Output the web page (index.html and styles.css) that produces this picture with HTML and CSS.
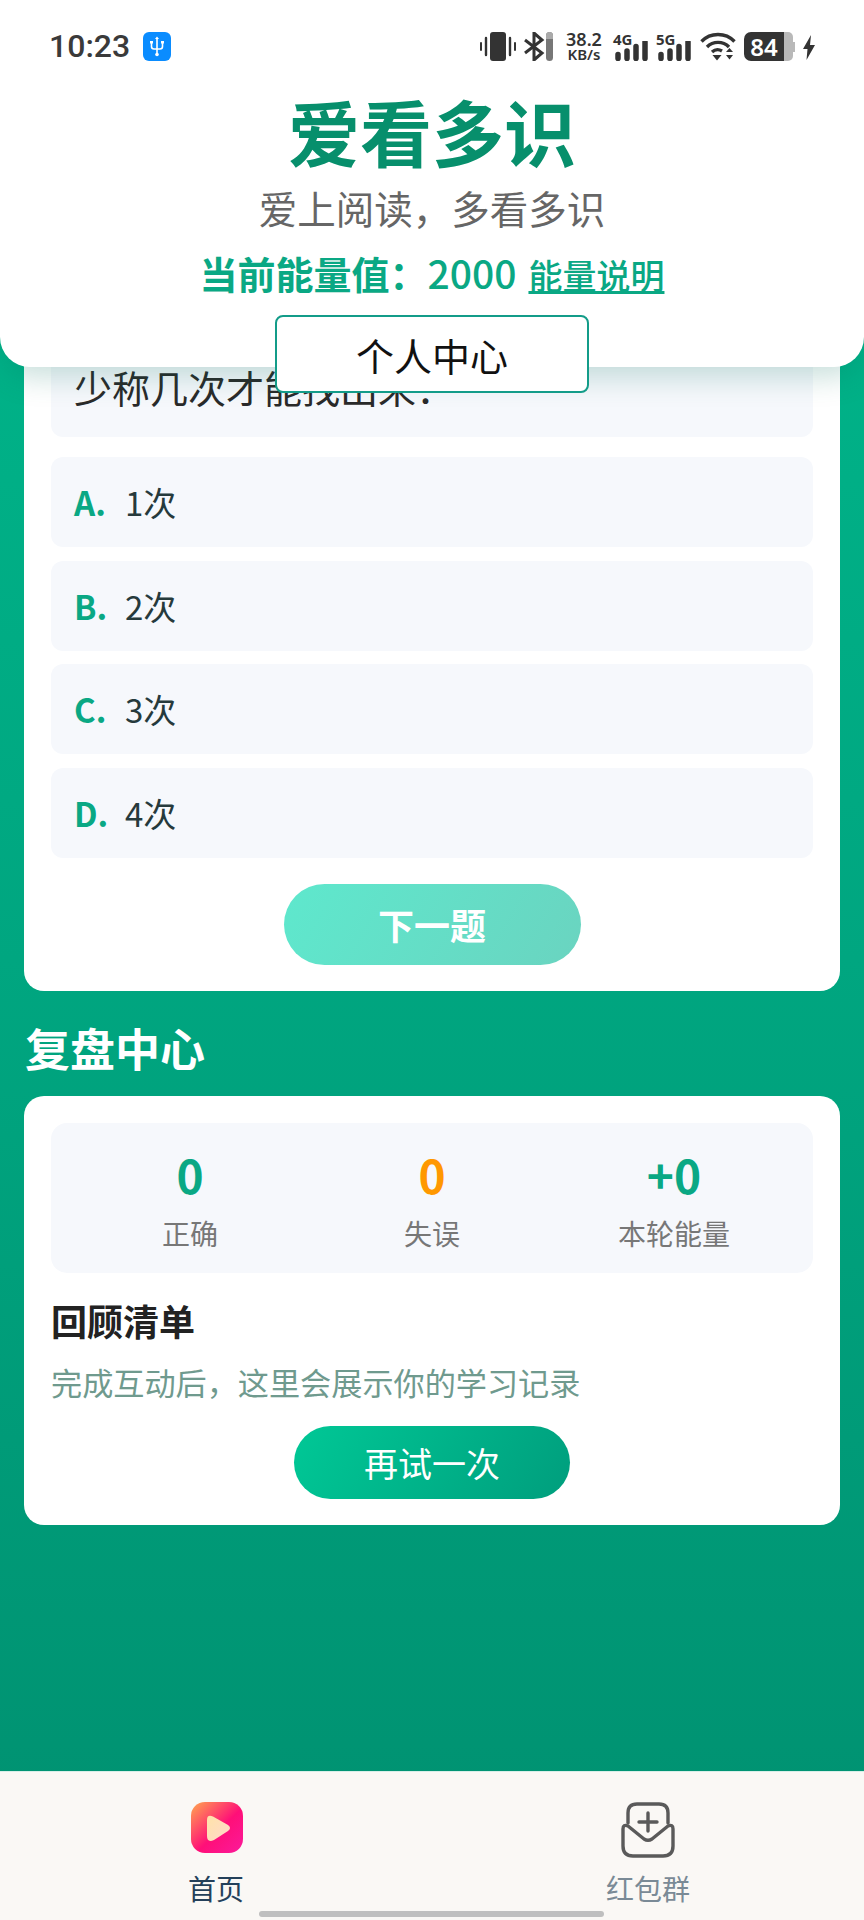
FILE: index.html
```html
<!DOCTYPE html>
<html lang="zh-CN">
<head>
  <meta charset="UTF-8" />
  <meta name="viewport" content="width=device-width, initial-scale=1.0"/>
  <title>爱看多识</title>
  <link rel="stylesheet" href="styles.css">
</head>
<body>
  <div class="app">
    <header class="top">
      <div class="status">
        <div class="status-left">
          <span class="clock">10:23</span>
          <svg class="usb" viewBox="0 0 28 29">
            <rect width="28" height="29" rx="6" fill="#0a8cff"/>
            <path d="M14 6v17M8.5 11v3.5q0 2.5 2.5 2.5h6q2.500 0 2.500-2.500V11" fill="none" stroke="#fff" stroke-width="1.600"/>
            <path d="M14 4.500l2 2.500h-4zM7 9h3v2.500H7zM18 9h3v2.500h-3z" fill="#fff"/>
            <circle cx="14" cy="22.500" r="1.800" fill="#fff"/>
          </svg>
        </div>
        <div class="status-right">
          <svg class="ic-vib" viewBox="0 0 36 29">
            <rect x="10" y="0" width="16" height="29" rx="3" fill="#333"/>
            <path d="M6 6v17M30 6v17" stroke="#333" stroke-width="2.400" stroke-linecap="round"/>
            <path d="M1 11v7M35 11v7" stroke="#333" stroke-width="2" stroke-linecap="round"/>
          </svg>
          <svg class="ic-bt" viewBox="0 0 30 29">
            <path d="M2 8l17 13-8 7V1l8 7L2 21" fill="none" stroke="#333" stroke-width="3"/>
            <rect x="23" y="0" width="7" height="29" rx="3.500" fill="#777"/>
            <path d="M23 3.500a3.500 3.500 0 0 1 7 0V7h-7z" fill="#aaa"/>
          </svg>
          <div class="speed"><b>38.2</b><b class="unit">KB/s</b></div>
          <div class="net">
            <b>4G</b>
            <svg viewBox="0 0 33 20"><path d="M3 13.500v4M12 10v7.500M21 5.500v12M30 1v16.500" stroke="#333" stroke-width="5.500" stroke-linecap="round"/></svg>
          </div>
          <div class="net">
            <b>5G</b>
            <svg viewBox="0 0 33 20"><path d="M3 13.500v4M12 10v7.500M21 5.500v12M30 1v16.500" stroke="#333" stroke-width="5.500" stroke-linecap="round"/></svg>
          </div>
          <svg class="ic-wifi" viewBox="0 0 36 29">
            <path d="M1.500 9.500a23 23 0 0 1 33 0M7 15a15.500 15.500 0 0 1 22 0M12 20a8.500 8.500 0 0 1 10 -1" fill="none" stroke="#333" stroke-width="3.400"/>
            <path d="M12.500 23h9L17 28.500zM26 20l3.500-4 3.500 4zM26 23h7l-3.500 4.500z" fill="#333"/>
          </svg>
          <div class="battery"><span class="battery-num">84</span><i class="battery-rest"></i><i class="battery-tip"></i></div>
          <svg class="ic-bolt" viewBox="0 0 12 25">
            <path d="M8 0L0 14h4.500L3.500 25 12 10H7z" fill="#333"/>
          </svg>
        </div>
      </div>
      <h1>爱看多识</h1>
      <p class="sub">爱上阅读，多看多识</p>
      <p class="energy">当前能量值：<span class="energy-num">2000</span><a href="#">能量说明</a></p>
      <button class="me-btn">个人中心</button>
    </header>

    <main>
      <section class="card quiz">
        <div class="question">少称几次才能找出来：</div>
        <div class="options">
          <div class="option"><b>A.</b><span>1次</span></div>
          <div class="option"><b>B.</b><span>2次</span></div>
          <div class="option"><b>C.</b><span>3次</span></div>
          <div class="option"><b>D.</b><span>4次</span></div>
        </div>
        <button class="next-btn">下一题</button>
      </section>

      <h2>复盘中心</h2>
      <section class="card review">
        <div class="stats">
          <div class="stat"><b class="green">0</b><span>正确</span></div>
          <div class="stat"><b class="orange">0</b><span>失误</span></div>
          <div class="stat"><b class="green">+0</b><span>本轮能量</span></div>
        </div>
        <h3>回顾清单</h3>
        <p class="hint">完成互动后，这里会展示你的学习记录</p>
        <button class="retry-btn">再试一次</button>
      </section>
    </main>

    <nav class="tabs">
      <div class="tab tab-on">
        <svg viewBox="0 0 54 52">
          <defs>
            <linearGradient id="playBg" x1="0" y1="0" x2="1" y2="1">
              <stop offset="0" stop-color="#ffa84f"/>
              <stop offset=".55" stop-color="#ff0f78"/>
              <stop offset="1" stop-color="#fb1a9b"/>
            </linearGradient>
            <linearGradient id="playFg" x1="0" y1="0" x2="1" y2="1">
              <stop offset="0" stop-color="#ffe3a8"/>
              <stop offset="1" stop-color="#ffd9cc"/>
            </linearGradient>
          </defs>
          <rect x="1" y="0" width="52" height="51" rx="14" fill="url(#playBg)"/>
          <path d="M17 18q0-6 6-3.500l15 8.500q4 3 0 6L24 38q-7 3-7-4z" fill="url(#playFg)"/>
        </svg>
        <span>首页</span>
      </div>
      <div class="tab">
        <svg viewBox="0 0 54 56" fill="none" stroke="#5a5a5a" stroke-width="3.400" stroke-linecap="round" stroke-linejoin="round">
          <path d="M7 21V11Q7 2 16 2H38Q47 2 47 11V21"/>
          <path d="M2 27V44Q2 54 12 54H42Q52 54 52 44V27Q52 22 47 24L31 37Q27 39.500 23 37L7 24Q2 22 2 27Z"/>
          <path d="M27 11V29M18 20H36"/>
        </svg>
        <span>红包群</span>
      </div>
      <i class="handle"></i>
    </nav>
  </div>
</body>
</html>
```

FILE: styles.css
```css
* {
  box-sizing: border-box;
}
body {
  margin: 0;
  font-family: "Noto Sans CJK SC", "Noto Sans", sans-serif;
  color: #222;
}
h1, h2, h3, p {
  margin: 0;
}
button {
  font-family: inherit;
  border: none;
  display: block;
}
.app {
  position: relative;
  width: 864px;
  height: 1920px;
  overflow: hidden;
  display: flex;
  flex-direction: column;
  background: linear-gradient(180deg, #00b88c 0, #00a680 50%, #009070 100%);
}

/* top panel sits over the scrolled content */
.top {
  position: absolute;
  top: 0;
  left: 0;
  right: 0;
  height: 367px;
  z-index: 2;
  background: #fff;
  border-radius: 0 0 30px 30px;
  box-shadow: 0 10px 30px rgba(0, 110, 90, 0.22);
  text-align: center;
}
.status {
  height: 88px;
  padding: 32px 49px 0;
  display: flex;
  justify-content: space-between;
  align-items: flex-start;
  color: #333;
}
.status-left {
  display: flex;
  align-items: center;
  gap: 13px;
  height: 29px;
}
.clock {
  font-family: Roboto, sans-serif;
  font-size: 32px;
  font-weight: 500;
  line-height: 29px;
  color: #3a3a3a;
}
.usb {
  width: 28px;
  height: 29px;
}
.status-right {
  display: flex;
  align-items: flex-start;
  height: 29px;
}
.ic-vib {
  width: 36px;
  height: 29px;
}
.ic-bt {
  width: 30px;
  height: 29px;
  margin-left: 7px;
}
.speed {
  margin-left: 10px;
  width: 42px;
  font-family: "Noto Sans", sans-serif;
  text-align: center;
  line-height: 15px;
  font-size: 18px;
  color: #333;
}
.speed b {
  display: block;
  font-weight: 600;
}
.speed .unit {
  font-size: 15px;
}
.net {
  position: relative;
  width: 33px;
  height: 29px;
  margin-left: 10px;
}
.net + .net {
  margin-left: 10px;
}
.net b {
  position: absolute;
  left: -2px;
  top: -1px;
  font-family: "Noto Sans", sans-serif;
  font-size: 15px;
  line-height: 16px;
  font-weight: 700;
  color: #333;
}
.net svg {
  position: absolute;
  left: 0;
  bottom: 0;
  width: 33px;
  height: 20px;
}
.ic-wifi {
  width: 36px;
  height: 29px;
  margin-left: 9px;
}
.battery {
  display: flex;
  align-items: center;
  height: 29px;
  width: 51px;
  margin-left: 8px;
}
.battery-num {
  width: 40px;
  height: 29px;
  background: #333;
  color: #fff;
  border-radius: 7px 0 0 7px;
  font-family: "Noto Sans", sans-serif;
  font-size: 24px;
  line-height: 29px;
  font-weight: 600;
  text-align: center;
}
.battery-rest {
  width: 9px;
  height: 29px;
  background: #b9b9b9;
  border-radius: 0 5px 5px 0;
}
.battery-tip {
  width: 2px;
  height: 10px;
  background: #b9b9b9;
}
.ic-bolt {
  width: 12px;
  height: 25px;
  margin: 3px 0 0 8px;
}
.top h1 {
  font-size: 72px;
  line-height: 84px;
  font-weight: 700;
  color: #078f6c;
}
.sub {
  font-size: 38.500px;
  line-height: 50px;
  margin-top: 10px;
  color: #666;
}
.energy {
  margin-top: 15px;
  font-size: 38px;
  line-height: 50px;
  font-weight: 700;
  color: #0aa884;
}
.energy-num {
  font-size: 39px;
  font-weight: 500;
}
.energy a {
  margin-left: 12px;
  font-size: 34px;
  font-weight: 500;
  color: #0aa884;
  text-decoration: underline;
}
.me-btn {
  position: absolute;
  left: 275px;
  top: 315px;
  width: 314px;
  height: 78px;
  background: #fff;
  border: 2px solid #139c89;
  border-radius: 8px;
  font-size: 38px;
  color: #111;
}

/* content */
main {
  flex: 1;
  padding: 310px 24px 0;
}
.card {
  background: #fff;
  border-radius: 20px;
  padding: 27px;
}
.question {
  height: 100px;
  padding: 25px 23px;
  background: #f6f8fc;
  border-radius: 12px;
  font-size: 38px;
  line-height: 50px;
  color: #2a2a2a;
}
.options {
  margin-top: 20px;
  display: flex;
  flex-direction: column;
  gap: 13.500px;
}
.option {
  height: 90px;
  padding: 0 23px;
  background: #f6f8fc;
  border-radius: 12px;
  display: flex;
  align-items: center;
  font-size: 33px;
  color: #263a3c;
}
.option b {
  width: 51px;
  color: #0aa884;
  font-weight: 700;
}
.next-btn {
  width: 297px;
  height: 81px;
  margin: 26px auto 0;
  border-radius: 41px;
  background: linear-gradient(120deg, #5ee8cd, #6ad4c0);
  color: #fff;
  font-size: 36px;
  font-weight: 700;
}
.quiz {
  padding-bottom: 26px;
}
h2 {
  height: 105px;
  padding-top: 27px;
  padding-left: 1px;
  font-size: 45px;
  line-height: 60px;
  font-weight: 700;
  color: #fff;
}
.review {
  padding-bottom: 26px;
}
.stats {
  height: 150px;
  padding: 0 18px;
  background: #f6f8fc;
  border-radius: 16px;
  display: grid;
  grid-template-columns: repeat(3, 1fr);
  text-align: center;
}
.stat b {
  display: block;
  margin-top: 23px;
  font-size: 46px;
  line-height: 56px;
  font-weight: 700;
}
.stat span {
  display: block;
  margin-top: 11px;
  font-size: 28px;
  line-height: 40px;
  color: #777;
}
.green {
  color: #0aa884;
}
.orange {
  color: #ff9800;
}
h3 {
  margin-top: 22px;
  font-size: 36px;
  line-height: 50px;
  font-weight: 700;
  color: #222;
}
.hint {
  margin-top: 15px;
  font-size: 31.150px;
  line-height: 44px;
  color: #6f9a8e;
}
.retry-btn {
  width: 276px;
  height: 73px;
  margin: 22px auto 0;
  border-radius: 37px;
  background: linear-gradient(120deg, #00c896, #009e7d);
  color: #fff;
  font-size: 34px;
}

/* bottom tabs */
.tabs {
  position: relative;
  height: 149px;
  background: #faf8f5;
  border-top: 1px solid #d8efe8;
  display: grid;
  grid-template-columns: 432px 432px;
}
.tab {
  display: flex;
  flex-direction: column;
  align-items: center;
  padding-top: 30px;
  font-size: 28px;
  line-height: 40px;
  color: #7a8a96;
}
.tab svg {
  width: 54px;
  height: 56px;
}
.tab span {
  margin-top: 10px;
}
.tab-on {
  color: #24405a;
}
.tab-on svg {
  height: 52px;
  margin-left: 2px;
}
.tab-on span {
  margin-top: 14px;
}
.handle {
  position: absolute;
  left: 259px;
  bottom: 3px;
  width: 345px;
  height: 6px;
  border-radius: 3px;
  background: #bfbfbf;
}
```
